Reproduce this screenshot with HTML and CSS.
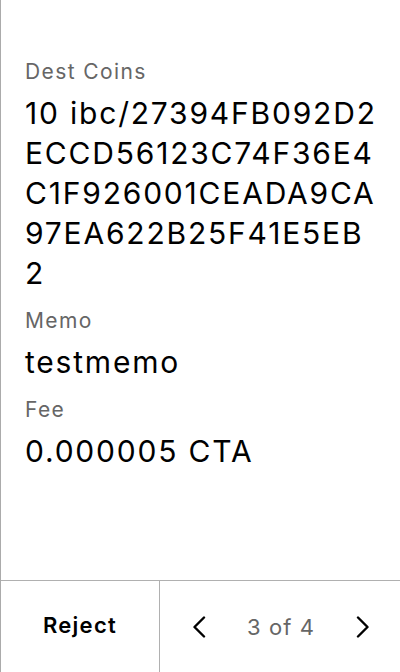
FILE: index.html
```
<!DOCTYPE html>
<html>
<head>
<meta charset="utf-8">
<link rel="stylesheet" href="styles.css">
</head>
<body>
<div class="screen">
  <div class="content">
    <div class="field">
      <div class="label">Dest Coins</div>
      <div class="value">10 ibc/27394FB092D2ECCD56123C74F36E4C1F926001CEADA9CA97EA622B25F41E5EB2</div>
    </div>
    <div class="field">
      <div class="label">Memo</div>
      <div class="value">testmemo</div>
    </div>
    <div class="field">
      <div class="label">Fee</div>
      <div class="value">0.000005 CTA</div>
    </div>
  </div>
  <div class="footer">
    <div class="reject">Reject</div>
    <div class="pager">
      <svg class="chev" width="14" height="22" viewBox="0 0 14 22"><path d="M12 1.5 L2.5 11 L12 20.5" fill="none" stroke="#000" stroke-width="2.4" stroke-linecap="round" stroke-linejoin="round"/></svg>
      <span class="count">3 of 4</span>
      <svg class="chev" width="14" height="22" viewBox="0 0 14 22"><path d="M2 1.5 L11.5 11 L2 20.5" fill="none" stroke="#000" stroke-width="2.4" stroke-linecap="round" stroke-linejoin="round"/></svg>
    </div>
  </div>
</div>
</body>
</html>
```

FILE: styles.css
```
* { box-sizing: border-box; }
html, body { margin: 0; padding: 0; background: #fff; }
body { font-family: Inter, "Noto Sans", sans-serif; }
.screen {
  width: 400px;
  height: 672px;
  border-left: 1px solid #ababab;
  display: flex;
  flex-direction: column;
}
.content {
  flex: 1;
  padding: 58px 0 0 24px;
}
.field { margin-bottom: 14px; }
.label {
  font-size: 21px;
  line-height: 28px;
  letter-spacing: 1.4px;
  color: #666;
  margin-bottom: 7px;
}
.value {
  width: 352px;
  font-size: 30px;
  line-height: 40px;
  letter-spacing: 1.8px;
  color: #000;
  word-break: break-all;
}
.footer {
  height: 92px;
  border-top: 1px solid #b0b0b0;
  display: flex;
}
.reject {
  width: 159px;
  border-right: 1px solid #b0b0b0;
  display: flex;
  align-items: center;
  justify-content: center;
  padding-bottom: 3px;
  font-size: 22px;
  font-weight: 600;
  letter-spacing: 1.3px;
  color: #000;
}
.pager {
  flex: 1;
  display: flex;
  align-items: center;
  justify-content: space-between;
  padding: 0 30px 0 32px;
}
.count {
  font-size: 22px;
  letter-spacing: 1.1px;
  color: #666;
}
.chev { display: block; }
```
